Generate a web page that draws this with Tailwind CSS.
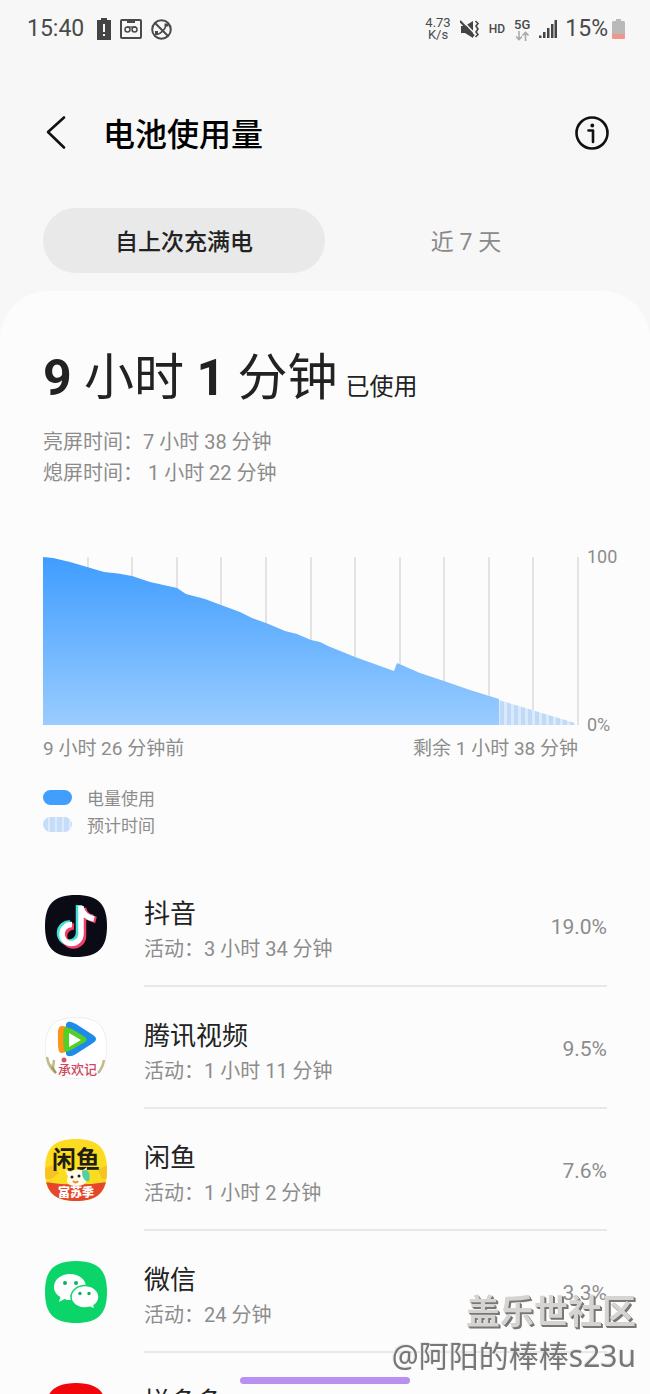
<!DOCTYPE html>
<html lang="zh-CN">
<head>
  <meta charset="UTF-8" />
  <meta name="viewport" content="width=device-width, initial-scale=1.0" />
  <title>电池使用量</title>
  <script src="https://cdn.jsdelivr.net/npm/@tailwindcss/browser@4"></script>
</head>
<body class="h-screen overflow-hidden bg-[#f7f7f7] text-[#222] font-[Roboto,'Noto_Sans_CJK_SC',sans-serif]">

  <!-- Status bar -->
  <div class="flex items-center justify-between h-[58px] pl-[27px] pr-[25px] text-[#4a4a4a]">
    <div class="flex items-center gap-[9px]">
      <span class="text-[23px] mr-1">15:40</span>
      <svg class="w-[14px] h-[22px]" viewBox="0 0 14 22" fill="#444"><path d="M4 0h6v2h4v20H0V2h4z"/><path d="M6 6h2v8H6zM6 16h2v2H6z" fill="#f7f7f7"/></svg>
      <svg class="w-[22px] h-[20px]" viewBox="0 0 22 20" fill="none" stroke="#4a4a4a" stroke-width="2"><rect x="1" y="1" width="20" height="18" rx="1"/><path d="M7 1h8v3H7z" fill="#4a4a4a" stroke="none"/><circle cx="7.500" cy="10.500" r="2.500" stroke-width="1.500"/><circle cx="14.500" cy="10.500" r="2.500" stroke-width="1.500"/><path d="M7 8h9" stroke-width="1.300"/></svg>
      <svg class="w-[21px] h-[21px]" viewBox="0 0 21 21" fill="none" stroke="#4a4a4a" stroke-width="2"><circle cx="10.500" cy="10.500" r="9.300"/><path d="M4 4l13 13"/><path d="M6 15.500c4-1 8-5 9-9" stroke-width="1.600"/><path d="M5.500 12v4M13.500 6h4" stroke-width="3"/></svg>
    </div>
    <div class="flex items-center">
      <span class="text-[13px] leading-[12px] text-center mr-[9px]">4.73<br>K/s</span>
      <svg class="w-[20px] h-[19px] mr-[9px]" viewBox="0 0 20 19" fill="#444"><path d="M1 6h4l8-5v17l-8-5H1z"/><path d="M2 0l13 14" stroke="#f7f7f7" stroke-width="1.500"/><path d="M0 1l14 15" stroke="#444" stroke-width="2"/><path d="M15.500 1l2.500 2.500-2 2.500 2 3-2 3 2 2.500-2.500 2.500" fill="none" stroke="#444" stroke-width="1.600"/></svg>
      <span class="text-[12px] font-medium mr-[9px]">HD</span>
      <div class="flex flex-col items-center mr-[9px]">
        <span class="text-[13px] leading-[13px] font-medium">5G</span>
        <svg class="w-[14px] h-[10px]" viewBox="0 0 14 10" fill="none" stroke="#aaa" stroke-width="1.600"><path d="M4 0v8M1 5.500l3 3 3-3M10.500 10V2M7.500 4.500l3-3 3 3"/></svg>
      </div>
      <svg class="w-[18px] h-[18px] mr-2" viewBox="0 0 18 18" fill="#444"><path d="M0 15.500h2.500V18H0zM4 12h2.500v6H4zM8 8h2.500v10H8zM12 4h2.500v14H12zM15.500 0H18v18h-2.500z"/></svg>
      <span class="text-[23px] mr-1">15%</span>
      <svg class="w-[13px] h-[20px]" viewBox="0 0 13 20"><path d="M4 0h5v2h3l1 1v16l-1 1H1l-1-1V3l1-1h3z" fill="#b9b9b9"/><path d="M0 15h13v4l-1 1H1l-1-1z" fill="#f0968a"/></svg>
    </div>
  </div>

  <!-- Title -->
  <header class="flex items-center h-[150px] pl-[44px] pr-[41px]">
    <button class="mr-[35px]" aria-label="返回">
      <svg class="w-[24px] h-[36px]" viewBox="0 0 24 36" fill="none" stroke="#111" stroke-width="2.600" stroke-linecap="round" stroke-linejoin="round"><path d="M20 2.500L4 17l16 15.500"/></svg>
    </button>
    <h1 class="text-[32px] font-medium text-black flex-1 pt-1">电池使用量</h1>
    <button aria-label="信息">
      <svg class="w-[34px] h-[34px]" viewBox="0 0 34 34" fill="none" stroke="#111" stroke-width="2.600"><circle cx="17" cy="17" r="15.500"/><path d="M13.500 14.500H18V26" stroke-linecap="round" stroke-linejoin="round"/><circle cx="17.300" cy="9.500" r="1.900" fill="#111" stroke="none"/></svg>
    </button>
  </header>

  <!-- Tabs -->
  <nav class="flex px-[43px] mb-[18px]">
    <button class="flex-1 h-[65px] pt-1.5 rounded-full bg-[#e9e9e9] text-[23px] font-medium">自上次充满电</button>
    <button class="flex-1 h-[65px] pt-1.5 rounded-full text-[23px] text-[#8a8a8a]">近 7 天</button>
  </nav>

  <main class="bg-[#fcfcfc] rounded-t-[48px] px-[43px] pt-[55px]">

    <!-- Summary -->
    <h2 class="text-[50px] leading-[64px] whitespace-nowrap mb-[8px]"><b class="font-bold">9</b> 小时 <b class="font-bold">1</b> 分钟<span class="text-[24px] ml-2">已使用</span></h2>
    <p class="text-[20px] leading-[31px] text-[#8c8c8c]">亮屏时间：7 小时 38 分钟</p>
    <p class="text-[20px] leading-[31px] text-[#8c8c8c]">熄屏时间：&nbsp;1 小时 22 分钟</p>

    <!-- Battery chart -->
    <div class="flex mt-[68px] -mr-[10px]">
      <svg class="flex-1 min-w-0 h-[168px]" viewBox="0 0 536 168" preserveAspectRatio="none">
        <defs>
          <linearGradient id="used" x1="0" y1="0" x2="0" y2="1">
            <stop offset="0" stop-color="#3f9dff"/>
            <stop offset="1" stop-color="#9accff"/>
          </linearGradient>
          <pattern id="estimate" width="7" height="168" patternUnits="userSpaceOnUse">
            <path d="M0 0h7v168H0z" fill="#dbeafb"/>
            <path d="M2 0h4v168H2z" fill="#bfdaf8"/>
          </pattern>
        </defs>
        <path d="M45 0v168M89 0v168M134 0v168M178 0v168M223 0v168M268 0v168M312 0v168M357 0v168M401 0v168M446 0v168M490 0v168M535 0v168" stroke="#e3e3e3" stroke-width="2"/>
        <path d="M456 143L532 166v2h-76z" fill="url(#estimate)"/>
        <path d="M0 0L10 1 27 5 44 10 61 15 75 16.500 89 19 107 25 134 31 143 37 162 42 178 48 197 55 209 61 223 66 242 74 254 77 268 83 277 85 285 89 312 100 351 114 354 106 377 116 401 124 427 133 456 142V168H0z" fill="url(#used)"/>
      </svg>
      <div class="flex flex-col justify-between w-[38px] pl-2 -my-[10px] text-[18px] leading-[20px] text-[#8c8c8c]">
        <span>100</span>
        <span>0%</span>
      </div>
    </div>
    <div class="flex justify-between mt-[9px] mr-[29px] text-[19px] leading-[30px] text-[#8c8c8c]">
      <span>9 小时 26 分钟前</span>
      <span>剩余 1 小时 38 分钟</span>
    </div>

    <!-- Legend -->
    <ul class="mt-[20px] mb-[27px] text-[17px] leading-[24px] text-[#8c8c8c]">
      <li class="flex items-center gap-[15px]"><span class="w-[29px] h-[15px] rounded-full bg-[#429efc]"></span><span class="pt-[3px]">电量使用</span></li>
      <li class="flex items-center gap-[15px]"><span class="w-[29px] h-[15px] rounded-full bg-[repeating-linear-gradient(90deg,#c5ddf9_0_5px,#dceafb_5px_7px)]"></span><span class="pt-[3px]">预计时间</span></li>
    </ul>

    <!-- App list -->
    <ul>
      <li class="flex items-center h-[122px] pl-[2px]">
        <svg class="w-[62px] h-[62px] shrink-0 mr-[37px]" viewBox="0 0 62 62">
          <path d="M31 0C53 0 62 9 62 31S53 62 31 62 0 53 0 31 9 0 31 0z" fill="#0b0b16"/>
          <g fill="none" stroke-width="6.500">
            <path d="M34 10v28a9.500 9.500 0 1 1-9-9.500M34 11c1 6 5 11 14 12" stroke="#3fe0d8" />
            <path d="M38 13v28a9.500 9.500 0 1 1-9-9.500M38 13c1 6 5 10 13 12" stroke="#f0406a"/>
            <path d="M36 11v28a9.500 9.500 0 1 1-9-9.500M36 12c1 6 5 10 13 12" stroke="#fff" stroke-width="5.500"/>
          </g>
        </svg>
        <div class="flex flex-1 items-center justify-between h-full pt-1.5 border-b-2 border-[#e8e8e8]">
          <div class="pt-1">
            <h3 class="text-[26px] leading-[38px]">抖音</h3>
            <p class="text-[20px] leading-[32px] text-[#8c8c8c]">活动：3 小时 34 分钟</p>
          </div>
          <span class="text-[21px] text-[#8c8c8c]">19.0%</span>
        </div>
      </li>
      <li class="flex items-center h-[122px] pl-[2px]">
        <svg class="w-[62px] h-[62px] shrink-0 mr-[37px]" viewBox="0 0 62 62">
          <path d="M31 .5C53 .5 61.500 9 61.500 31S53 61.500 31 61.500 .5 53 .5 31 9 .5 31 .5z" fill="#fff" stroke="#eee"/>
          <path d="M17 9c-5 0-4 8-4 14s0 14 4 13l8-2V10z" fill="#ff9416"/>
          <path d="M21 7c2-4 6-2 10 0l17 11c4 3 4 5 0 8L31 37c-5 3-9 3-10 0z" fill="#1d8bea"/>
          <path d="M19 11c2-2 5 0 8 1l13 8c2 2 2 3 0 5L26 33c-4 2-6 2-7 0-1-4-1-17 0-22z" fill="#55cf25"/>
          <path d="M24 16l12 7-12 7z" fill="#fff"/>
          <path d="M2 40c1 7 4 12 9 16M3 46l5 5 1-8M59 43c-1 5-3 10-6 13" fill="none" stroke="#c4b98a" stroke-width="2.500"/>
          <path d="M7 50l4 6" stroke="#8f9b50" stroke-width="2"/>
          <text x="13" y="57" font-size="13" font-weight="500" fill="#cf4760" font-family="Noto Sans CJK SC, sans-serif">承欢记</text>
          <circle cx="19" cy="43" r="2.500" fill="#dc5468"/>
        </svg>
        <div class="flex flex-1 items-center justify-between h-full pt-1.5 border-b-2 border-[#e8e8e8]">
          <div class="pt-1">
            <h3 class="text-[26px] leading-[38px]">腾讯视频</h3>
            <p class="text-[20px] leading-[32px] text-[#8c8c8c]">活动：1 小时 11 分钟</p>
          </div>
          <span class="text-[21px] text-[#8c8c8c]">9.5%</span>
        </div>
      </li>
      <li class="flex items-center h-[122px] pl-[2px]">
        <svg class="w-[62px] h-[62px] shrink-0 mr-[37px]" viewBox="0 0 62 62">
          <defs><clipPath id="fish"><path d="M31 0C53 0 62 9 62 31S53 62 31 62 0 53 0 31 9 0 31 0z"/></clipPath></defs>
          <g clip-path="url(#fish)">
            <path d="M0 0h62v62H0z" fill="#fbdc20"/>
            <path d="M0 29l8-3 6 8-8 6H0zM62 26l-9 5 4 9h5z" fill="#f7c323"/>
            <path d="M0 43q31 5 62 0v19H0z" fill="#e4472c"/>
            <text x="7" y="29" font-size="24" font-weight="700" fill="#211d12" font-family="Noto Sans CJK SC, sans-serif">闲鱼</text>
            <path d="M20 31l6 2c3-3 8-3 11-1l5-4-1 8c3 8-3 11-10 11s-11-3-8-9z" fill="#fffbe8"/>
            <path d="M37 32c6-3 9 2 7 10-5 1-7-4-7-10z" fill="#51d0a2"/>
            <circle cx="27" cy="38" r="1.500" fill="#222"/><circle cx="34" cy="37" r="1.500" fill="#222"/>
            <path d="M28 42q3 3 5 0" stroke="#e88a30" stroke-width="2" fill="none"/>
            <text x="13" y="58" font-size="12" font-weight="900" fill="#fff" font-family="Noto Sans CJK SC, sans-serif">富苏季</text>
          </g>
        </svg>
        <div class="flex flex-1 items-center justify-between h-full pt-1.5 border-b-2 border-[#e8e8e8]">
          <div class="pt-1">
            <h3 class="text-[26px] leading-[38px]">闲鱼</h3>
            <p class="text-[20px] leading-[32px] text-[#8c8c8c]">活动：1 小时 2 分钟</p>
          </div>
          <span class="text-[21px] text-[#8c8c8c]">7.6%</span>
        </div>
      </li>
      <li class="flex items-center h-[122px] pl-[2px]">
        <svg class="w-[62px] h-[62px] shrink-0 mr-[37px]" viewBox="0 0 62 62">
          <path d="M31 0C53 0 62 9 62 31S53 62 31 62 0 53 0 31 9 0 31 0z" fill="#0bd468"/>
          <path d="M25 13c9 0 16 5.500 16 13s-7 13-16 13c-2 0-4 0-5.500-1L14 41l1.500-5C11 33.500 9 30 9 26c0-7.500 7-13 16-13z" fill="#fff"/>
          <circle cx="20" cy="22" r="2" fill="#0bb45a"/><circle cx="31" cy="22" r="2" fill="#0bb45a"/>
          <path d="M40 24.500c8 0 14 5 14 11.500 0 3.500-2 6.500-5 8.500l1 4-5-2.300c-1.500.5-3 .8-5 .8-8 0-14-5-14-11s6-11.500 14-11.500z" fill="#fff" stroke="#0bd468" stroke-width="1.500"/>
          <circle cx="35" cy="32.500" r="1.700" fill="#0bb45a"/><circle cx="44" cy="32.500" r="1.700" fill="#0bb45a"/>
        </svg>
        <div class="flex flex-1 items-center justify-between h-full pt-1.5 border-b-2 border-[#e8e8e8]">
          <div class="pt-1">
            <h3 class="text-[26px] leading-[38px]">微信</h3>
            <p class="text-[20px] leading-[32px] text-[#8c8c8c]">活动：24 分钟</p>
          </div>
          <span class="text-[21px] text-[#8c8c8c]">3.3%</span>
        </div>
      </li>
      <li class="flex items-center h-[122px] pl-[2px]">
        <svg class="w-[62px] h-[62px] shrink-0 mr-[37px]" viewBox="0 0 62 62"><path d="M31 0C53 0 62 9 62 31S53 62 31 62 0 53 0 31 9 0 31 0z" fill="#f0060b"/></svg>
        <h3 class="flex-1 h-full pt-[30px] text-[26px] leading-[38px]">拼多多</h3>
      </li>
    </ul>
  </main>

  <!-- Gesture bar -->
  <div class="fixed bottom-[10px] left-1/2 -translate-x-1/2 w-[170px] h-[7px] rounded-full bg-[#b990f2]"></div>

  <!-- Watermark -->
  <div class="fixed bottom-[15px] right-[14px] text-right whitespace-nowrap font-['Noto_Sans_CJK_SC',sans-serif]">
    <div class="text-[34px] leading-[46px] font-bold text-[#d6d3d1] [text-shadow:1px_1px_0_#777,2px_2px_0_#777]">盖乐世社区</div>
    <div class="text-[30px] leading-[46px] font-['Noto_Sans','Noto_Sans_CJK_SC',sans-serif] text-[#777] [text-shadow:-1px_-1px_0_#e8e8e8]">@阿阳的棒棒s23u</div>
  </div>

</body>
</html>
